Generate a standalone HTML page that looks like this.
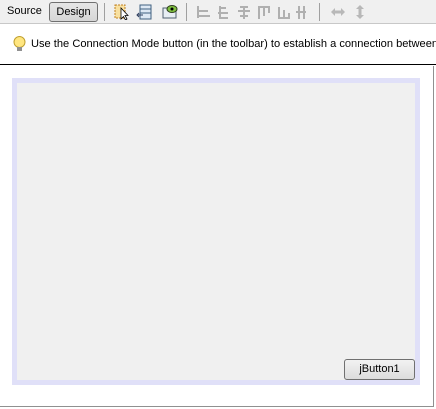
<!DOCTYPE html>
<html><head><style>
*{margin:0;padding:0;box-sizing:border-box}
body{width:436px;height:409px;background:#fff;font-family:"Liberation Sans",sans-serif;font-size:11px;position:relative;overflow:hidden}
.tb{position:absolute;left:0;top:0;width:436px;height:24px;background:#f0f0f0;border-bottom:1px solid #c8c8c8}
.src{position:absolute;left:7px;top:5px;color:#000}
.des{position:absolute;left:49px;top:2px;width:49px;height:20px;border:1px solid #707070;border-radius:3px;background:linear-gradient(#e6e6e6,#d6d6d6);text-align:center;line-height:18px}
.sep{position:absolute;top:3px;width:1px;height:18px;background:#a0a0a0}
.ic{position:absolute;top:4px;width:16px;height:16px}
.info{position:absolute;left:0;top:25px;width:436px;height:40px;background:#fff;border-bottom:1px solid #000;overflow:hidden}
.info span{position:absolute;left:31px;top:13px;white-space:nowrap;color:#000;font-size:11.1px}
.frame{position:absolute;left:0;top:66px;width:434px;height:341px;border-right:1px solid #909090;border-bottom:1px solid #909090}
.panel{position:absolute;left:12px;top:78px;width:408px;height:307px;border:5px solid #e0e0f8;background:#f0f0f0}
.btn{position:absolute;left:344px;top:359px;width:71px;height:21px;border:1px solid #707070;border-radius:3px;background:linear-gradient(#f2f2f2,#dcdcdc);text-align:center;line-height:19px}
</style></head><body>
<div class="tb">
<div class="src">Source</div>
<div class="des">Design</div>
<div class="sep" style="left:104px"></div>
<svg class="ic" style="left:114px" viewBox="0 0 16 16"><rect x="1" y="1" width="10" height="13" fill="#f8e0a0" stroke="#c08020" stroke-dasharray="2 1"/><path d="M7 4 L7 15 L9.5 12.5 L11.5 16 L13 15 L11 11.5 L14 11.5 Z" fill="#fff" stroke="#000" stroke-width=".8"/></svg>
<svg class="ic" style="left:136px" viewBox="0 0 16 16"><rect x="4" y="1" width="11" height="14" fill="#dde8f4" stroke="#406080"/><path d="M4 5h11M4 9h11" stroke="#406080"/><path d="M1 11h6M3 9l-2 2 2 2" stroke="#304060" fill="none"/></svg>
<svg class="ic" style="left:162px" viewBox="0 0 16 16"><rect x="1" y="4" width="13" height="10" fill="#e8eef4" stroke="#506070"/><ellipse cx="10" cy="5" rx="5" ry="3.5" fill="#80c040" stroke="#304020"/><circle cx="10" cy="5" r="1.5" fill="#000"/></svg>
<div class="sep" style="left:186px"></div>
<svg class="ic" style="left:196px;width:110px" viewBox="0 0 110 16" fill="none" stroke="#b0b0b0" stroke-width="2"><path d="M2 2v12M2 7h10M2 12h12"/><path d="M24 4h6M22 9h10M24 14h8M24 2v13"/><path d="M42 7h12M44 3h8M44 12h8M48 2v13"/><path d="M62 3h12M63 3v12M68 3v9M73 3v6"/><path d="M82 14h12M83 3v12M88 6v9M93 9v6"/><path d="M103 2v13M108 2v13M100 8h12"/></svg>
<div class="sep" style="left:319px"></div>
<svg class="ic" style="left:330px" viewBox="0 0 16 16"><path d="M1 8l4-4v2.5h6V4l4 4-4 4V9.5H5V12z" fill="#b8b8b8"/></svg>
<svg class="ic" style="left:352px" viewBox="0 0 16 16"><path d="M8 1l4 4H9.5v6H12l-4 4-4-4h2.5V5H4z" fill="#b8b8b8"/></svg>
</div>
<div class="info">
<svg style="position:absolute;left:13px;top:11px" width="13" height="17" viewBox="0 0 13 17"><ellipse cx="6.5" cy="6" rx="5.5" ry="5.5" fill="#ffe680" stroke="#c0a030"/><rect x="4" y="11" width="5" height="4" fill="#909090"/></svg>
<span>Use the Connection Mode button (in the toolbar) to establish a connection between c</span>
</div>
<div class="frame"></div>
<div class="panel"></div>
<div class="btn">jButton1</div>
</body></html>
